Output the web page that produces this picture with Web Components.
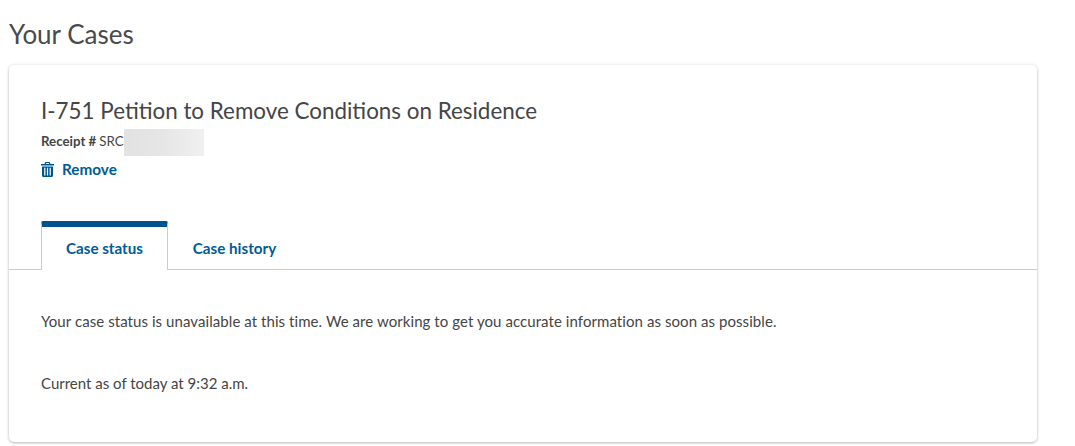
<!DOCTYPE html>
<html>
<head>
<meta charset="utf-8">
<title>Your Cases</title>
<style>
    html, body { margin: 0; background: #fff; }
    body { font-family: Lato, "Open Sans", sans-serif; color: #454545; }
</style>
</head>
<body>
<case-page>
    <case-card title="I-751 Petition to Remove Conditions on Residence" receipt="SRC">
        <case-tabs>
            <p>Your case status is unavailable at this time. We are working to get you accurate information as soon as possible.</p>
            <p>Current as of today at 9:32 a.m.</p>
        </case-tabs>
    </case-card>
</case-page>

<script>
const pageTemplate = document.createElement('template');
pageTemplate.innerHTML = `
<style>
    :host { display: block; width: 1028px; padding: 0 0 4px 9px; }
    h1 {
        margin: 0;
        padding-top: 19px;
        height: 65px;
        box-sizing: border-box;
        font-size: 26px;
        line-height: 30px;
        font-weight: 400;
        color: #4a4a4a;
    }
</style>
<h1>Your Cases</h1>
<slot></slot>
`;

class CasePage extends HTMLElement {
    constructor() {
        super();
        this.attachShadow({mode: 'open'});
        this.shadowRoot.appendChild(pageTemplate.content.cloneNode(true));
    }
}

const cardTemplate = document.createElement('template');
cardTemplate.innerHTML = `
<style>
    :host {
        display: block;
        height: 377px;
        box-sizing: border-box;
        background: #fff;
        border-radius: 5px;
        box-shadow: 0 1px 3px rgba(0, 0, 0, 0.28), 0 -1px 4px rgba(0, 0, 0, 0.04);
    }
    header { padding: 32px 32px 0; height: 156px; box-sizing: border-box; }
    h2 {
        margin: 0;
        font-size: 22.4px;
        line-height: 28px;
        font-weight: 400;
        color: #454545;
    }
    .receipt {
        display: flex;
        align-items: center;
        height: 27px;
        margin-top: 2px;
        font-size: 13.3px;
    }
    .receipt b { margin-right: 3px; font-weight: 700; }
    .blur {
        width: 80px;
        height: 27px;
        margin-top: 4px;
        background: linear-gradient(90deg, #e2e2e2, #e6e6e6 50%, #f0f0f0);
    }
    .remove {
        display: flex;
        align-items: center;
        gap: 8px;
        margin-top: 6px;
        font-size: 15.3px;
        font-weight: 700;
        color: #005c95;
    }
    svg { width: 13px; height: 15px; display: block; }
</style>
<header>
    <h2></h2>
    <div class="receipt"><b>Receipt #</b><span class="src"></span><div class="blur"></div></div>
    <div class="remove">
        <svg viewBox="0 0 13 15" fill="#00558c">
            <path d="M4.4 0h4.2l1 2H13v1.6H0V2h3.4zM5.2 1.100l-.4.9h3.400l-.4-.9z"/>
            <path d="M1 4.400h11V13.500a1.500 1.500 0 0 1-1.500 1.500h-8A1.500 1.500 0 0 1 1 13.500zM3.200 5.800v7.600h1.200V5.800zM5.900 5.800v7.600h1.200V5.800zM8.600 5.800v7.600h1.200V5.800z" fill-rule="evenodd"/>
        </svg>
        <span>Remove</span>
    </div>
</header>
<slot></slot>
`;

class CaseCard extends HTMLElement {
    constructor() {
        super();
        this.attachShadow({mode: 'open'});
        this.shadowRoot.appendChild(cardTemplate.content.cloneNode(true));
        this.shadowRoot.querySelector('h2').textContent = this.getAttribute('title');
        this.shadowRoot.querySelector('.src').textContent = this.getAttribute('receipt');
    }
}

const tabsTemplate = document.createElement('template');
tabsTemplate.innerHTML = `
<style>
    :host { display: block; }
    .bar {
        display: flex;
        height: 49px;
        padding-left: 32px;
        border-bottom: 1px solid #ccc;
        box-sizing: border-box;
        font-size: 15.2px;
        font-weight: 700;
        color: #005c95;
    }
    .tab {
        display: flex;
        align-items: center;
        justify-content: center;
        box-sizing: border-box;
        padding-top: 6px;
    }
    .tab.active {
        width: 127px;
        height: 49px;
        background: #fff;
        border: 1px solid #ccc;
        border-bottom: 0;
        border-top: 6px solid #00538f;
        border-radius: 2px 2px 0 0;
        padding: 0 0 2px;
    }
    .tab.other { width: 133px; }
    .panel { padding: 41px 32px 0; font-size: 15px; line-height: 20px; }
    ::slotted(p) { margin: 0 0 42px; }
    ::slotted(p:first-child) { letter-spacing: 0.07px; }
</style>
<div class="bar">
    <div class="tab active">Case status</div>
    <div class="tab other">Case history</div>
</div>
<div class="panel"><slot></slot></div>
`;

class CaseTabs extends HTMLElement {
    constructor() {
        super();
        this.attachShadow({mode: 'open'});
        this.shadowRoot.appendChild(tabsTemplate.content.cloneNode(true));
    }
}

customElements.define('case-page', CasePage);
customElements.define('case-card', CaseCard);
customElements.define('case-tabs', CaseTabs);
</script>
</body>
</html>
